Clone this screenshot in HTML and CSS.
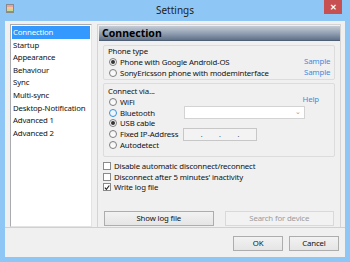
FILE: index.html
```html
<!DOCTYPE html>
<html lang="en">

<head>
	<meta charset="UTF-8" />
	<title>Settings</title>
	<link rel="stylesheet" href="styles.css">
</head>

<body>

	<div class="window">
		<div class="titlebar">
			<div class="title-left">
				<svg class="app-icon" width="8" height="9" viewBox="0 0 8 9">
					<rect x="0.5" y="0.5" width="7" height="8" fill="#f4f4f4" stroke="#8a8a8a" />
					<rect x="1" y="1.5" width="6" height="1" fill="#d9534f" />
					<rect x="1" y="3.5" width="6" height="1" fill="#f0a030" />
					<rect x="1" y="5.5" width="6" height="1" fill="#8cbf3f" />
					<rect x="1" y="7" width="6" height="1" fill="#5b9bd5" />
				</svg>
			</div>
			<div class="title">Settings</div>
			<div class="title-right">
				<div class="close-btn">✕</div>
			</div>
		</div>

		<div class="client">
			<div class="main">
				<ul class="nav">
					<li class="active">Connection</li>
					<li>Startup</li>
					<li>Appearance</li>
					<li>Behaviour</li>
					<li>Sync</li>
					<li>Multi-sync</li>
					<li>Desktop-Notification</li>
					<li>Advanced 1</li>
					<li>Advanced 2</li>
				</ul>

				<div class="panel">
					<div class="panel-header">Connection</div>

					<div class="panel-body">
						<div class="group group-phone">
							<div class="group-label">Phone type</div>
							<div class="row">
								<span class="radio checked"></span>
								<span>Phone with Google Android-OS</span>
							</div>
							<a class="link">Sample</a>
							<div class="row">
								<span class="radio"></span>
								<span>SonyEricsson phone with modeminterface</span>
							</div>
							<a class="link">Sample</a>
						</div>

						<div class="group group-connect">
							<div class="connect-head">
								<div class="group-label">Connect via...</div>
								<a class="link help">Help</a>
							</div>
							<div class="row">
								<span class="radio"></span>
								<span class="opt">WiFi</span>
							</div>
							<div class="row">
								<span class="radio focus"></span>
								<span class="opt">Bluetooth</span>
								<div class="combo"><span class="chev">⌄</span></div>
							</div>
							<div class="row">
								<span class="radio checked"></span>
								<span class="opt">USB cable</span>
							</div>
							<div class="row">
								<span class="radio"></span>
								<span class="opt">Fixed IP-Address</span>
								<div class="ipbox">
									<span>.</span><span>.</span><span>.</span>
								</div>
							</div>
							<div class="row">
								<span class="radio"></span>
								<span class="opt">Autodetect</span>
							</div>
						</div>

						<div class="checks">
							<div class="row">
								<span class="checkbox"></span>
								<span>Disable automatic disconnect/reconnect</span>
							</div>
							<div class="row">
								<span class="checkbox"></span>
								<span>Disconnect after 5 minutes' inactivity</span>
							</div>
							<div class="row">
								<span class="checkbox checked">
									<svg width="7" height="7" viewBox="0 0 7 7">
										<path d="M1 3.6 L2.8 5.6 L6.2 1.2" fill="none" stroke="#222" stroke-width="1.3" />
									</svg>
								</span>
								<span>Write log file</span>
							</div>
						</div>

						<div class="panel-buttons">
							<div class="btn">Show log file</div>
							<div class="btn disabled">Search for device</div>
						</div>
					</div>
				</div>
			</div>

			<div class="footer">
				<div class="btn small">OK</div>
				<div class="btn small">Cancel</div>
			</div>
		</div>
	</div>

</body>

</html>
```

FILE: styles.css
```css
* {
	box-sizing: border-box;
	margin: 0;
	padding: 0;
}

body {
	font-family: 'Noto Sans', 'Open Sans', sans-serif;
	font-size: 7.8px;
	letter-spacing: -0.15px;
	color: #111;
	background: #8ec7f6;
}

.window {
	width: 350px;
	height: 262px;
	background: #8ec7f6;
	display: flex;
	flex-direction: column;
}

/* title bar */
.titlebar {
	height: 21px;
	display: grid;
	grid-template-columns: 1fr auto 1fr;
	align-items: start;
}

.title-left {
	padding: 4px 0 0 6px;
}

.app-icon {
	display: block;
}

.title {
	font-size: 10px;
	letter-spacing: 0;
	line-height: 20px;
	color: #222;
}

.title-right {
	display: flex;
	justify-content: flex-end;
	padding-right: 8px;
}

.close-btn {
	width: 18px;
	height: 14px;
	background: #c75050;
	color: white;
	font-size: 8px;
	line-height: 14px;
	text-align: center;
	font-weight: bold;
}

/* client area */
.client {
	flex: 1;
	margin: 0 5px 5px 5px;
	background: #f0f0f0;
	display: flex;
	flex-direction: column;
}

.main {
	flex: 1;
	display: flex;
	gap: 5px;
	padding: 3px 4px 0 5px;
}

.nav {
	list-style: none;
	width: 82px;
	flex-shrink: 0;
	background: white;
	border: 1px solid #a9abb0;
	border-bottom-color: #e3e3e3;
	border-right-color: #e3e3e3;
	padding: 1px;
	overflow: hidden;
}

.nav li {
	line-height: 12.6px;
	height: 12.6px;
	padding-left: 1px;
	white-space: nowrap;
}

.nav li.active {
	background: #3399ff;
	color: white;
}

/* right panel */
.panel {
	flex: 1;
	min-width: 0;
	border: 1px solid #d4d4d4;
	border-bottom: none;
	padding: 1px 0 0 1px;
	display: flex;
	flex-direction: column;
}

.panel-header {
	height: 15px;
	line-height: 15px;
	padding-left: 3px;
	font-size: 10.5px;
	letter-spacing: 0;
	font-weight: bold;
	color: #000;
	background: linear-gradient(to bottom, #c4ccd6, #8e9db0 55%, #5f7189);
	border-bottom: 1px solid #4e5f75;
}

.panel-body {
	flex: 1;
	padding: 4px 5px 1px 4px;
	display: flex;
	flex-direction: column;
}

.group {
	border: 1px solid #dcdcdc;
	border-radius: 2px;
	padding: 0 3px 2px 4px;
}

.group-label {
	line-height: 10px;
	height: 10px;
}

.row {
	display: flex;
	align-items: center;
	height: 11px;
	white-space: nowrap;
}

.link {
	color: #3b8ee0;
	line-height: 11px;
}

.group-phone {
	display: grid;
	grid-template-columns: minmax(0, 1fr) 27px;
	height: 35px;
}

.group-phone .group-label {
	grid-column: 1 / 3;
}

.group-connect {
	margin-top: 3px;
	height: 74px;
	padding-top: 2px;
}

.group-connect .row {
	height: 10.6px;
}

.connect-head {
	display: flex;
	justify-content: space-between;
	height: 11px;
	padding-right: 12px;
}

.connect-head .help {
	margin-top: 8px;
}

.opt {
	width: 64px;
}

/* radio buttons */
.radio {
	width: 8px;
	height: 8px;
	border: 1px solid #7f7f7f;
	border-radius: 50%;
	background: linear-gradient(#f2f2f2, #ffffff);
	margin: 0 3px 0 1px;
	display: flex;
	align-items: center;
	justify-content: center;
	flex-shrink: 0;
}

.radio.checked::after {
	content: '';
	width: 4px;
	height: 4px;
	border-radius: 50%;
	background: #333;
}

.radio.focus {
	border-color: #3d8fd8;
	background: #eef6fd;
}

.combo {
	width: 121px;
	height: 13px;
	flex-shrink: 0;
	background: white;
	border: 1px solid #d3d3d3;
	display: flex;
	justify-content: flex-end;
	align-items: center;
	padding-right: 3px;
}

.chev {
	color: #9a9a9a;
	font-size: 7px;
	line-height: 7px;
	margin-top: -3px;
}

.ipbox {
	width: 74px;
	height: 13px;
	flex-shrink: 0;
	background: #f3f3f3;
	border: 1px solid #c7c7c7;
	display: flex;
	justify-content: space-evenly;
	align-items: center;
	color: #555;
	font-size: 7px;
	margin-left: -1px;
}

/* checkboxes */
.checks {
	margin-top: 4px;
}

.checks .row {
	height: 10.5px;
}

.checkbox {
	width: 8px;
	height: 8px;
	border: 1px solid #8a8a8a;
	background: white;
	margin-right: 3px;
	display: flex;
	align-items: center;
	justify-content: center;
	flex-shrink: 0;
}

/* buttons */
.panel-buttons {
	margin-top: auto;
	display: flex;
	gap: 11px;
	padding: 0 1px;
}

.btn {
	width: 110px;
	height: 15px;
	line-height: 13px;
	text-align: center;
	border: 1px solid #adadad;
	background: linear-gradient(to bottom, #f2f2f2, #e5e5e5);
	color: #111;
}

.btn.disabled {
	border-color: #d9d9d9;
	background: #f2f2f2;
	color: #9c9c9c;
}

.footer {
	height: 30px;
	border-top: 1px solid #d0d0d0;
	display: flex;
	justify-content: flex-end;
	gap: 6px;
	padding: 8px 6px 0 0;
}

.btn.small {
	width: 50px;
}
```
